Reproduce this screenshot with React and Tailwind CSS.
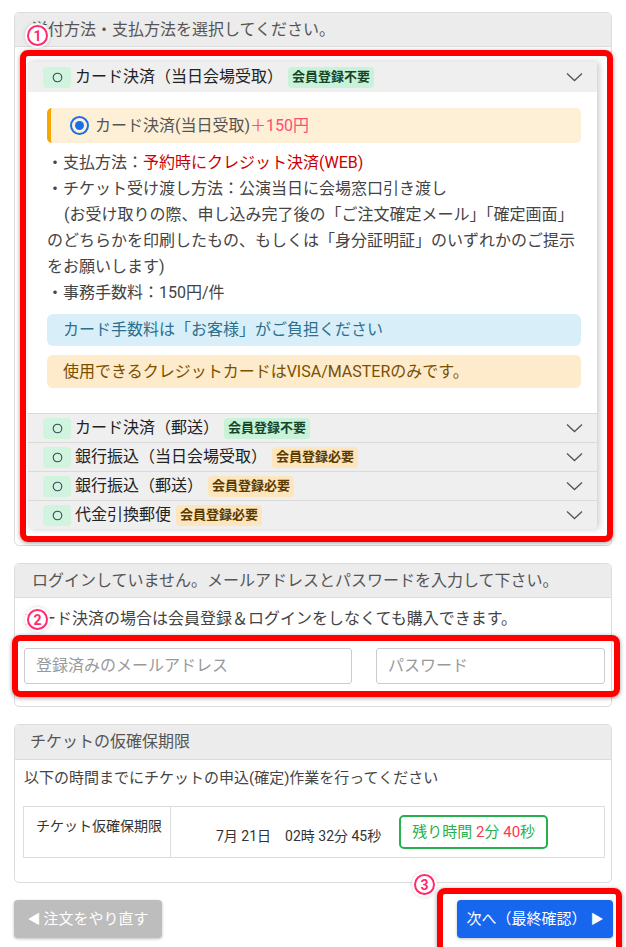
import React from 'react';

const rows = [
  { label: 'カード決済（郵送）', need: false },
  { label: '銀行振込（当日会場受取）', need: true },
  { label: '銀行振込（郵送）', need: true },
  { label: '代金引換郵便', need: true },
];

function Chevron() {
  return (
    <svg width="17" height="10" viewBox="0 0 17 10" fill="none" className="ml-auto">
      <path d="M1 1.5l7.5 7 7.5-7" stroke="#555" strokeWidth="1.3" />
    </svg>
  );
}

function Pill() {
  return (
    <span className="w-[28px] h-[21px] rounded-[4px] bg-[#d1f4de] flex items-center justify-center">
      <svg width="11" height="11" viewBox="0 0 11 11">
        <circle cx="5.5" cy="5.5" r="4.3" fill="none" stroke="#3a4a5a" strokeWidth="1.1" />
      </svg>
    </span>
  );
}

function Badge({ need }) {
  return need ? (
    <span className="h-[21px] px-[4px] rounded-[4px] bg-[#fde5bd] text-[#5a3a00] text-[13px] font-bold flex items-center">会員登録必要</span>
  ) : (
    <span className="h-[21px] px-[4px] rounded-[4px] bg-[#c9f3d9] text-[#16452a] text-[13px] font-bold flex items-center">会員登録不要</span>
  );
}

function Mark({ n, className }) {
  return (
    <span className={`absolute w-[21px] h-[21px] rounded-full bg-white border-2 border-[#ff2b6e] shadow-[0_0_0_2px_rgba(255,255,255,0.9),0_0_4px_2px_rgba(0,0,0,0.15)] flex items-center justify-center text-[14px] leading-none text-[#ff2b6e] font-bold font-['Roboto',sans-serif] ${className}`}>
      {n}
    </span>
  );
}

export default function App() {
  return (
    <div className="relative w-[626px] h-[947px] overflow-hidden bg-white pt-[12px] px-[14px] font-['Roboto','Noto_Sans_CJK_JP',sans-serif] text-[#444]">
      {/* 送付方法 */}
      <section className="border border-[#dcdcdc] rounded-[5px] bg-white">
        <div className="h-[34px] bg-[#ececec] border-b border-[#dcdcdc] rounded-t-[5px] pl-[17px] flex items-center text-[16px] text-[#555]">
          送付方法・支払方法を選択してください。
        </div>
        <div className="pt-[3px] pb-[3px] pl-[5px] -mr-[2px]">
          <div className="border-[6px] border-[#ff0000] rounded-[8px] shadow-[0_1px_4px_rgba(0,0,0,0.4)] pt-[6px] pb-[7px] pl-[2px] pr-[10px]">
            <div className="bg-[#efefef] shadow-[2px_0_6px_rgba(0,0,0,0.22)] rounded-b-[4px]">
              <div className="h-[30px] flex items-center gap-[4px] pl-[15px] pr-[14px]">
                <Pill />
                <span className="text-[16px] text-[#222] mr-[1px]">カード決済（当日会場受取）</span>
                <Badge need={false} />
                <Chevron />
              </div>
              <div className="bg-white pl-[19px] pr-[16px] pt-[16px] pb-[25px]">
                <div className="h-[35px] border-l-4 border-[#f7a600] bg-[#fdf0d6] rounded-[5px] flex items-center pl-[19px] text-[16px]">
                  <span className="w-[19px] h-[19px] rounded-full border-2 border-[#1a6fe8] flex items-center justify-center mr-[6px]">
                    <span className="w-[9px] h-[9px] rounded-full bg-[#1a6fe8]" />
                  </span>
                  <span className="text-[#555]">カード決済(当日受取)</span>
                  <span className="text-[#ff4d74]">＋150円</span>
                </div>
                <div className="mt-[7px] text-[16px] leading-[26px] text-[#444] whitespace-nowrap">
                  <div>・支払方法：<span className="text-[#cc0000]">予約時にクレジット決済(WEB)</span></div>
                  <div>・チケット受け渡し方法：公演当日に会場窓口引き渡し</div>
                  <div className="pl-[17px]">(お受け取りの際、申し込み完了後の「ご注文確定メール」「確定画面」</div>
                  <div>のどちらかを印刷したもの、もしくは「身分証明証」のいずれかのご提示</div>
                  <div>をお願いします)</div>
                  <div>・事務手数料：150円/件</div>
                </div>
                <div className="mt-[8px] h-[32px] rounded-[6px] bg-[#d8eff9] text-[#2e6f8e] text-[16px] flex items-center pl-[16px]">
                  カード手数料は「お客様」がご負担ください
                </div>
                <div className="mt-[9px] h-[33px] rounded-[6px] bg-[#fdebcb] text-[#7a5000] text-[16px] flex items-center pl-[16px]">
                  使用できるクレジットカードはVISA/MASTERのみです。
                </div>
              </div>
              {rows.map((r) => (
                <div key={r.label} className="h-[29px] border-t border-[#dadada] flex items-center gap-[4px] pl-[15px] pr-[14px]">
                  <Pill />
                  <span className="text-[16px] text-[#222] mr-[1px]">{r.label}</span>
                  <Badge need={r.need} />
                  <Chevron />
                </div>
              ))}
            </div>
          </div>
        </div>
      </section>

      {/* ログイン */}
      <section className="mt-[17px] border border-[#dcdcdc] rounded-[5px] bg-white">
        <div className="h-[34px] bg-[#ececec] border-b border-[#dcdcdc] rounded-t-[5px] pl-[17px] flex items-center text-[16px] text-[#555]">
          ログインしていません。メールアドレスとパスワードを入力して下さい。
        </div>
        <div className="pt-[9px] pb-[9px]">
          <div className="pl-[9px] text-[16px] leading-[24px] text-[#444]">
            カード決済の場合は会員登録＆ログインをしなくても購入できます。
          </div>
          <div className="mt-[4px] -ml-[3px] -mr-[9px] border-[6px] border-[#ff0000] rounded-[8px] shadow-[0_1px_4px_rgba(0,0,0,0.4)] pt-[7px] pb-[7px] pl-[6px] pr-[9px] flex gap-[24px]">
            <div className="w-[328px] h-[36px] border border-[#cccccc] rounded-[3px] flex items-center pl-[11px] text-[16px] text-[#999]">
              登録済みのメールアドレス
            </div>
            <div className="flex-1 h-[36px] border border-[#cccccc] rounded-[3px] flex items-center pl-[11px] text-[16px] text-[#999]">
              パスワード
            </div>
          </div>
        </div>
      </section>

      {/* 仮確保期限 */}
      <section className="mt-[17px] border border-[#dcdcdc] rounded-[5px] bg-white">
        <div className="h-[35px] bg-[#ececec] border-b border-[#dcdcdc] rounded-t-[5px] pl-[15px] flex items-center text-[16px] text-[#555]">
          チケットの仮確保期限
        </div>
        <div className="pt-[6px] pb-[24px] pl-[8px] pr-[6px]">
          <div className="pl-[1px] text-[15px] leading-[24px] text-[#444]">
            以下の時間までにチケットの申込(確定)作業を行ってください
          </div>
          <div className="mt-[16px] h-[52px] border border-[#dddddd] flex">
            <div className="w-[147px] shrink-0 border-r border-[#dddddd] pl-[12px] pt-[9px] text-[14px] text-[#333] leading-[20px] whitespace-nowrap">
              チケット仮確保期限
            </div>
            <div className="flex-1 flex items-center pl-[45px]">
              <span className="text-[14px] text-[#333] mt-[9px] whitespace-pre">7月 21日　02時 32分 45秒</span>
              <span className="ml-[18px] w-[149px] h-[34px] border-2 border-[#27b14c] rounded-[5px] flex items-center justify-center text-[15px] text-[#27b14c]">
                残り時間&nbsp;<span className="text-[#ff3355]">2</span>分&nbsp;<span className="text-[#ff3355]">40</span>秒
              </span>
            </div>
          </div>
        </div>
      </section>

      {/* ボタン */}
      <div className="mt-[5px] flex items-start justify-between">
        <button className="mt-[12px] w-[148px] h-[38px] rounded-[4px] bg-[#bdbdbd] text-white text-[15px] shadow-[0_1px_3px_rgba(0,0,0,0.25)] flex items-center justify-center gap-[3px]">
          <span className="text-[13px]">◀</span>注文をやり直す
        </button>
        <div className="-mr-[10px] border-[6px] border-[#ff0000] rounded-[8px] shadow-[0_1px_4px_rgba(0,0,0,0.4)] pt-[6px] pb-[10px] pl-[14px] pr-[3px]">
          <button className="w-[156px] h-[38px] rounded-[4px] bg-[#1767ee] text-white text-[15px] shadow-[0_1px_3px_rgba(0,0,0,0.25)] flex items-center justify-center gap-[4px]">
            次へ（最終確認）<span className="text-[13px]">▶</span>
          </button>
        </div>
      </div>

      <Mark n="1" className="left-[27px] top-[25px]" />
      <Mark n="2" className="left-[27px] top-[609px]" />
      <Mark n="3" className="left-[414px] top-[874px]" />
    </div>
  );
}
